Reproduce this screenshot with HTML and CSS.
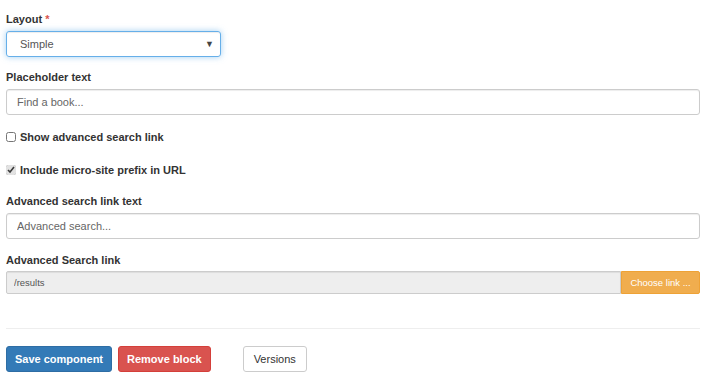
FILE: index.html
```html
<!DOCTYPE html>
<html lang="en">
<head>
    <meta charset="UTF-8">
    <meta name="viewport" content="width=device-width, initial-scale=1.0">
    <title>Search block settings</title>
    <link rel="stylesheet" href="styles.css">
</head>
<body>

<form class="block-form">
    <div class="form-group">
        <label class="control-label">Layout <span class="required">*</span></label>
        <div class="select-box">
            <span>Simple</span>
            <span class="caret">▼</span>
        </div>
    </div>

    <div class="form-group">
        <label class="control-label">Placeholder text</label>
        <input class="form-control" type="text" placeholder="Find a book...">
    </div>

    <div class="checkbox first">
        <label><input type="checkbox"> Show advanced search link</label>
    </div>

    <div class="checkbox last">
        <label><input type="checkbox" checked> Include micro-site prefix in URL</label>
    </div>

    <div class="form-group">
        <label class="control-label">Advanced search link text</label>
        <input class="form-control" type="text" placeholder="Advanced search...">
    </div>

    <div class="form-group link-group">
        <label class="control-label">Advanced Search link</label>
        <div class="input-group">
            <input class="form-control input-sm" type="text" value="/results" readonly>
            <button type="button" class="btn-choose">Choose link ...</button>
        </div>
    </div>

    <hr>

    <div class="actions">
        <button type="button" class="btn btn-primary">Save component</button>
        <button type="button" class="btn btn-danger">Remove block</button>
        <button type="button" class="btn btn-default">Versions</button>
    </div>
</form>

</body>
</html>
```

FILE: styles.css
```css
body {
    margin: 0;
    padding: 11px 0 0 6px;
    font-family: "Liberation Sans", Arial, sans-serif;
    font-size: 11px;
    color: #333;
    background-color: #fff;
}

.block-form {
    width: 694px;
}

.form-group {
    margin-bottom: 12px;
}

.control-label {
    display: block;
    font-weight: bold;
    line-height: 16px;
    margin-bottom: 4px;
}

.required {
    color: #d9534f;
}

.select-box {
    width: 215px;
    height: 26px;
    box-sizing: border-box;
    border: 1px solid #66afe9;
    border-radius: 3px;
    box-shadow: inset 0 1px 1px rgba(0, 0, 0, .075), 0 0 6px rgba(102, 175, 233, .6);
    display: flex;
    align-items: center;
    justify-content: space-between;
    padding: 0 6px 0 13px;
    color: #555;
}

.caret {
    font-size: 9px;
    color: #444;
}

.form-control {
    display: block;
    width: 100%;
    height: 26px;
    box-sizing: border-box;
    padding: 0 10px;
    font-family: inherit;
    font-size: 11px;
    color: #555;
    background-color: #fff;
    border: 1px solid #ccc;
    border-radius: 3px;
    box-shadow: inset 0 1px 1px rgba(0, 0, 0, .075);
}

.form-control::placeholder {
    color: #666;
}

.checkbox {
    margin: 0 0 17px;
}

.checkbox.first {
    margin-top: 14px;
}

.checkbox.last {
    margin-bottom: 15px;
}

.checkbox label {
    display: flex;
    align-items: center;
    font-weight: bold;
    line-height: 16px;
}

.checkbox input {
    width: 10px;
    height: 10px;
    margin: 0 4px 0 0;
    accent-color: #e2e2e2;
}

.link-group {
    margin-top: 13px;
}

.link-group .control-label {
    margin-bottom: 3px;
}

.input-group {
    display: flex;
}

.input-sm {
    height: 23px;
    font-size: 9.5px;
    padding: 0 7px;
    background-color: #eee;
    border-radius: 2px 0 0 2px;
}

.btn-choose {
    flex: 0 0 79px;
    height: 23px;
    border: 1px solid #eea236;
    border-radius: 0 2px 2px 0;
    background-color: #f0ad4e;
    color: #fff;
    font-family: inherit;
    font-size: 9.5px;
    padding: 0;
}

hr {
    border: 0;
    border-top: 1px solid #eee;
    margin: 34px 0 17px;
}

.actions {
    display: flex;
}

.btn {
    height: 26px;
    padding: 0 8px;
    font-family: inherit;
    font-size: 11px;
    border: 1px solid transparent;
    border-radius: 3px;
    margin-right: 6px;
}

.btn-primary {
    background-color: #337ab7;
    border-color: #2e6da4;
    color: #fff;
    font-weight: bold;
}

.btn-danger {
    background-color: #d9534f;
    border-color: #d43f3a;
    color: #fff;
    font-weight: bold;
}

.btn-default {
    margin-left: 26px;
    padding: 0 10px;
    background-color: #fff;
    border-color: #ccc;
    color: #333;
}
```
